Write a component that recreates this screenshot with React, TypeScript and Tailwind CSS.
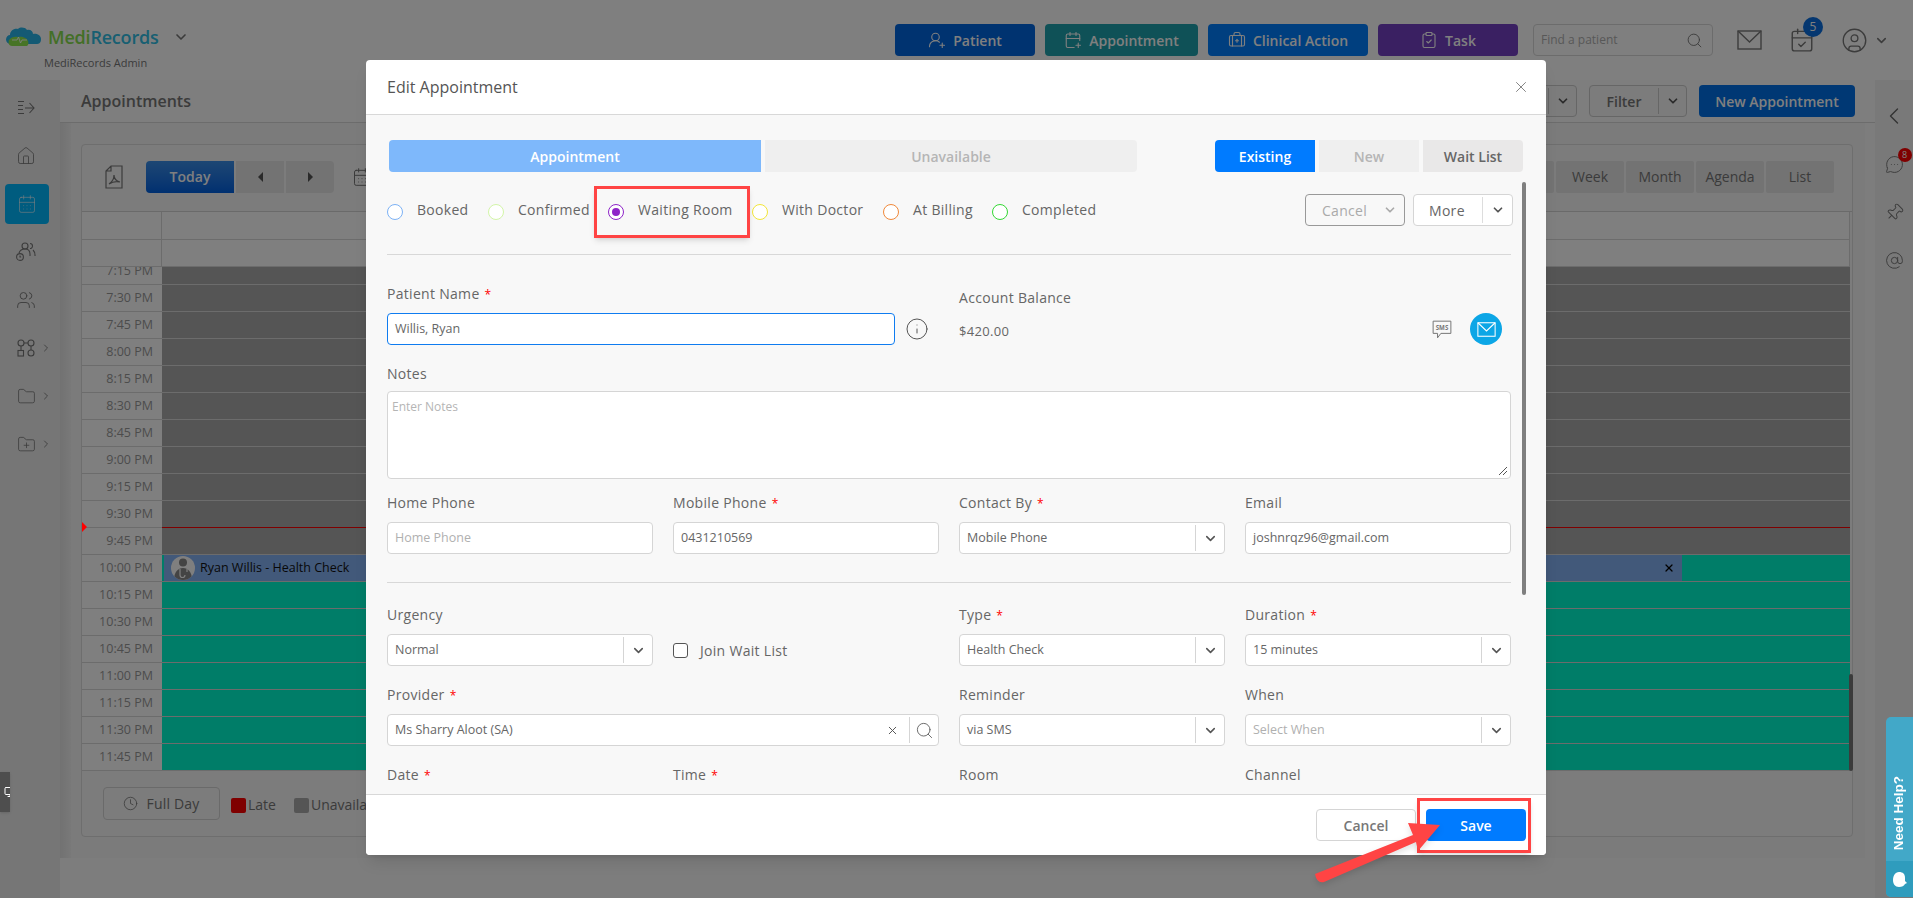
import {
  AtSign,
  BriefcaseMedical,
  CalendarCheck,
  CalendarDays,
  CalendarPlus,
  ChevronDown,
  ChevronLeft,
  ChevronRight,
  CircleUser,
  ClipboardCheck,
  Clock,
  Folder,
  FolderPlus,
  House,
  Info,
  MessageCircleMore,
  Monitor,
  Pin,
  Search,
  UserRoundPlus,
  Users,
  X,
} from 'lucide-react'

const times = [
  '7:15 PM', '7:30 PM', '7:45 PM', '8:00 PM', '8:15 PM', '8:30 PM', '8:45 PM', '9:00 PM', '9:15 PM', '9:30 PM', '9:45 PM',
  '10:00 PM', '10:15 PM', '10:30 PM', '10:45 PM', '11:00 PM', '11:15 PM', '11:30 PM', '11:45 PM',
]

const statuses = [
  { label: 'Booked', width: 'w-[101px]', ring: 'border-[#7db2f5]' },
  { label: 'Confirmed', width: 'w-[120px]', ring: 'border-[#d3f5a8]' },
  { label: 'Waiting Room', width: 'w-[144px]', ring: 'border-[#8e24c8]', checked: true },
  { label: 'With Doctor', width: 'w-[131px]', ring: 'border-[#f2e53a]' },
  { label: 'At Billing', width: 'w-[109px]', ring: 'border-[#f0893a]' },
  { label: 'Completed', width: 'w-[110px]', ring: 'border-[#35d835]' },
]

function Logo() {
  return (
    <svg width="36" height="20" viewBox="0 0 36 20">
      <path d="M5 17c-3 0-5-2-5-4.500S2 8 4 8c0-4 4-7 8-6 2-2 7-2 9 1 3-1 6 1 6 4 2-1 8 0 8 5s-3 5-6 5z" fill="#28b4e8" />
      <path d="M6 19c-3 0-4-3-3-6 2-3 6-4 9-3 4-1 9 1 10 4 1 3 0 5-2 5z" fill="#8fe84c" />
      <path d="M6 13h5l1.500-3 2 6 1.500-3h5" fill="none" stroke="#fff" strokeWidth="0.9" />
    </svg>
  )
}

function NavCollapseIcon() {
  return (
    <svg width="18" height="16" viewBox="0 0 18 16" fill="none" stroke="#777" strokeWidth="1.100">
      <path d="M1 1.500h6M1 5.500h5M1 9.500h5M1 13.500h6M8 8h9M12.500 3l4.500 5-4.500 5" />
    </svg>
  )
}

function UsersClockIcon() {
  return (
    <svg width="20" height="20" viewBox="0 0 20 20" fill="none" stroke="#777" strokeWidth="1.100">
      <circle cx="9" cy="4" r="3" />
      <path d="M14 1.500a2.500 2.500 0 0 1 0 5M3 11c1-3 3-4 6-4s5 1.500 5 5v2M17 8c1 1 2 2 2 5v1" />
      <circle cx="4" cy="15" r="3.400" />
      <path d="M4 13.500V15h1.200" />
    </svg>
  )
}

function WorkflowIcon() {
  return (
    <svg width="18" height="18" viewBox="0 0 18 18" fill="none" stroke="#777" strokeWidth="1.100">
      <circle cx="4" cy="4" r="3" />
      <circle cx="14" cy="4" r="3" />
      <rect x="1" y="11.500" width="5.500" height="5.500" />
      <circle cx="14" cy="14" r="3" />
      <path d="M7 4h4M4 7v4M14 7v4" />
    </svg>
  )
}

function EnvelopeIcon({ stroke, width, height }: { stroke: string; width: number; height: number }) {
  return (
    <svg width={width} height={height} viewBox="0 0 25 20" fill="none" stroke={stroke} strokeWidth="1.400">
      <rect x="1" y="1" width="23" height="18" />
      <path d="M1 1l11.500 11L24 1" />
    </svg>
  )
}

function DoctorAvatar() {
  return (
    <svg width="24" height="24" viewBox="0 0 24 24" className="rounded-full bg-[#fff]">
      <circle cx="12" cy="6.500" r="4" fill="#888" />
      <path d="M3 24c0-8 4-12 9-12s9 4 9 12z" fill="#888" />
      <path d="M9 13v6a2.500 2.500 0 0 0 5 0M16 13v3" fill="none" stroke="#fff" strokeWidth="1.200" />
    </svg>
  )
}

function Label({ text, required }: { text: string; required?: boolean }) {
  return (
    <div className="h-5 text-[14px] leading-5 tracking-[0.3px] text-[#666]">
      {text}
      {required && <span className="ml-[5px] text-[12px] text-[#f00]">*</span>}
    </div>
  )
}

function TextBox({ value, placeholder, focused }: { value?: string; placeholder?: string; focused?: boolean }) {
  return (
    <div
      className={`mt-[9px] flex h-8 items-center rounded-[4px] border bg-white px-[7px] text-[12.500px] ${
        focused ? 'border-[#0f7cf0]' : 'border-[#d5d5d5]'
      } ${value ? 'text-[#666]' : 'text-[#b0b0b0]'}`}
    >
      <span className="pt-px">{value || placeholder}</span>
    </div>
  )
}

function SelectBox({ value, placeholder }: { value?: string; placeholder?: string }) {
  return (
    <div className="mt-[9px] flex h-8 items-center rounded-[4px] border border-[#d5d5d5] bg-white pl-[7px] text-[12.500px]">
      <span className={`flex-1 pt-px ${value ? 'text-[#666]' : 'text-[#b0b0b0]'}`}>{value || placeholder}</span>
      <span className="flex h-[26px] w-[29px] items-center justify-center border-l border-[#d5d5d5]">
        <ChevronDown size={15} strokeWidth={2.500} className="text-[#555]" />
      </span>
    </div>
  )
}

function SplitButton({ label, className }: { label?: string; className: string }) {
  return (
    <div className={`flex h-8 items-center rounded-[4px] border border-[#ccc] bg-[#f8f8f8] text-[14px] font-semibold text-[#777] ${className}`}>
      <span className="flex-1 text-center">{label}</span>
      <span className="flex h-[26px] w-[28px] items-center justify-center border-l border-[#ccc]">
        <ChevronDown size={14} strokeWidth={3} className="text-[#555]" />
      </span>
    </div>
  )
}

function TopButton({ label, icon, className }: { label: string; icon: React.ReactNode; className: string }) {
  return (
    <div className={`flex h-8 items-center justify-center gap-[7px] rounded-[4px] text-[14px] font-semibold text-white ${className}`}>
      {icon}
      {label}
    </div>
  )
}

function TopBar() {
  return (
    <div className="flex h-20 items-center bg-white shadow-sm">
      <div className="ml-[6px] mt-4 w-[500px]">
        <div className="flex items-center">
          <Logo />
          <span className="ml-[6px] text-[18px] font-semibold leading-6 tracking-[-0.2px]">
            <span className="text-[#86de4e]">Medi</span>
            <span className="text-[#30bfe4]">Records</span>
          </span>
          <ChevronDown size={16} strokeWidth={2.500} className="ml-[14px] text-[#777]" />
        </div>
        <div className="ml-[38px] mt-[6px] text-[11px] leading-4 text-[#777]">MediRecords Admin</div>
      </div>
      <div className="ml-[389px] flex items-center gap-[10px]">
        <TopButton label="Patient" className="w-[140px] bg-[#0066e0]" icon={<UserRoundPlus size={18} strokeWidth={1.500} />} />
        <TopButton label="Appointment" className="w-[153px] bg-[#1ea2ae]" icon={<CalendarPlus size={18} strokeWidth={1.500} />} />
        <TopButton label="Clinical Action" className="w-[160px] bg-[#007eff]" icon={<BriefcaseMedical size={18} strokeWidth={1.500} />} />
        <TopButton label="Task" className="w-[140px] bg-[#7440c4]" icon={<ClipboardCheck size={18} strokeWidth={1.500} />} />
      </div>
      <div className="ml-[15px] flex h-8 w-[180px] items-center rounded-[4px] border border-[#d8d8d8] bg-white pl-[7px] pr-[9px] text-[12px] text-[#b0b0b0]">
        <span className="flex-1">Find a patient</span>
        <Search size={17} strokeWidth={1.300} className="text-[#777]" />
      </div>
      <span className="ml-[24px]"><EnvelopeIcon stroke="#787878" width={25} height={20} /></span>
      <div className="relative ml-[27px]">
        <CalendarCheck size={26} strokeWidth={1.300} className="text-[#787878]" />
        <span className="absolute -right-[8px] -top-[10px] flex h-5 w-5 items-center justify-center rounded-full bg-[#0a6fe0] text-[12px] text-white">5</span>
      </div>
      <CircleUser size={27} strokeWidth={1.200} className="ml-[26px] text-[#787878]" />
      <ChevronDown size={15} strokeWidth={2.500} className="ml-[6px] text-[#787878]" />
    </div>
  )
}

function SideNav() {
  return (
    <div className="flex w-[60px] flex-col bg-[#ececec] pt-1">
      <div className="flex h-12 w-[52px] items-center justify-center"><NavCollapseIcon /></div>
      <div className="flex h-12 w-[52px] items-center justify-center"><House size={20} strokeWidth={1} className="text-[#777]" /></div>
      <div className="flex h-12 items-center pl-[5px]">
        <div className="flex h-10 w-11 items-center justify-center rounded-[4px] bg-[#00b8ff]">
          <CalendarDays size={20} strokeWidth={1.200} className="text-white/60" />
        </div>
      </div>
      <div className="flex h-12 w-[52px] items-center justify-center"><UsersClockIcon /></div>
      <div className="flex h-12 w-[52px] items-center justify-center"><Users size={20} strokeWidth={1.100} className="text-[#777]" /></div>
      <div className="flex h-12 items-center pl-[17px]"><WorkflowIcon /><ChevronRight size={12} className="ml-[5px] text-[#888]" /></div>
      <div className="flex h-12 items-center pl-[17px]"><Folder size={19} strokeWidth={1} className="text-[#777]" /><ChevronRight size={12} className="ml-[4px] text-[#888]" /></div>
      <div className="flex h-12 items-center pl-[17px]"><FolderPlus size={19} strokeWidth={1} className="text-[#777]" /><ChevronRight size={12} className="ml-[4px] text-[#888]" /></div>
    </div>
  )
}

function RightRail() {
  return (
    <div className="flex w-[38px] flex-col items-center bg-[#f2f2f2] pt-[12px]">
      <div className="flex h-12 items-center"><ChevronLeft size={28} strokeWidth={1.200} className="text-[#666]" /></div>
      <div className="relative flex h-12 items-center">
        <MessageCircleMore size={19} strokeWidth={1.200} className="text-[#777]" />
        <span className="absolute -right-[8px] top-[8px] flex h-[14px] w-[14px] items-center justify-center rounded-full bg-[#ff0000] text-[9px] text-white">8</span>
      </div>
      <div className="flex h-12 items-center"><Pin size={19} strokeWidth={1.200} className="rotate-45 text-[#777]" /></div>
      <div className="flex h-12 items-center"><AtSign size={19} strokeWidth={1.200} className="text-[#777]" /></div>
    </div>
  )
}

function GridRow({ time, index }: { time: string; index: number }) {
  const busy = index < 11
  const hasEvent = time === '10:00 PM'
  const now = time === '9:30 PM'
  return (
    <div className="relative flex h-[27px] border-b border-[#d8d8d8]">
      {now && <span className="absolute -bottom-[5px] left-0 z-10 h-0 w-0 border-y-[5px] border-l-[5px] border-y-transparent border-l-[#ff0000]" />}
      <div className="w-[80px] bg-white pr-[9px] text-right text-[12.500px] leading-[26px] text-[#999]">{time}</div>
      <div className={`flex flex-1 ${busy ? 'bg-[#aaa]' : 'bg-[#00fad0]'} ${now ? '-mb-px border-b border-[#ff0000]' : ''}`}>
        {hasEvent && (
          <div className="flex w-[1520px] items-center border-l-[2px] border-[#00fad0] bg-[#84b2f4] pl-[7px] text-[12.500px] text-[#111]">
            <DoctorAvatar />
            <span className="ml-[5px] flex-1">Ryan Willis - Health Check</span>
            <X size={12} strokeWidth={2.500} className="mr-[7px] text-black" />
          </div>
        )}
      </div>
    </div>
  )
}

function ViewTab({ label, className }: { label: string; className?: string }) {
  return (
    <div className={`flex h-8 w-[68px] items-center justify-center rounded-[2px] bg-[#e6e6e6] text-[14px] text-[#777] ${className ?? ''}`}>
      {label}
    </div>
  )
}

function Calendar() {
  return (
    <div className="relative ml-[10px] mr-[12px] mt-[21px] flex h-[693px] flex-1 flex-col rounded-[4px] border border-[#dcdcdc] bg-[#f8f8f8]">
      <div className="flex h-[67px] shrink-0 items-center border-b border-[#d4d4d4] pb-[3px] pl-[23px] pr-[18px]">
        <svg width="18" height="24" viewBox="0 0 18 24" fill="none" stroke="#777" strokeWidth="1.200">
          <path d="M6 1h11v22H1V6zM6 1v5H1M4 19c3-2 5-6 5-9 0 4 2 6 6 7-4-1-8 0-11 2z" />
        </svg>
        <div className="ml-[23px] flex h-8 w-[88px] items-center justify-center rounded-l-[4px] bg-gradient-to-b from-[#3a8ee8] to-[#0060e0] text-[14px] font-semibold text-white">Today</div>
        <div className="ml-[2px] flex h-8 w-12 items-center justify-center bg-[#e6e6e6]"><span className="h-0 w-0 border-y-[5px] border-r-[5px] border-y-transparent border-r-[#555]" /></div>
        <div className="ml-[2px] flex h-8 w-12 items-center justify-center rounded-r-[4px] bg-[#e6e6e6]"><span className="h-0 w-0 border-y-[5px] border-l-[5px] border-y-transparent border-l-[#555]" /></div>
        <CalendarDays size={20} strokeWidth={1.200} className="ml-[18px] text-[#777]" />
        <div className="ml-auto flex items-center gap-[2px]">
          <ViewTab label="Day" className="bg-[#0070f0] text-white" />
          <ViewTab label="Week" />
          <ViewTab label="Month" />
          <ViewTab label="Agenda" />
          <ViewTab label="List" />
        </div>
      </div>
      <div className="mr-[2px] border-r border-[#d8d8d8]">
        <div className="flex h-[28px] border-b border-[#d8d8d8] bg-white"><div className="w-[80px] border-r border-[#d8d8d8]" /></div>
        <div className="flex h-[27px] border-b border-[#d8d8d8] bg-white"><div className="w-[80px] border-r border-[#d8d8d8]" /></div>
      </div>
      <div className="mr-[2px] h-[504px] overflow-hidden">
        <div className="-mt-[9px]">
          {times.map((t, i) => (
            <GridRow key={t} time={t} index={i} />
          ))}
        </div>
      </div>
      <div className="absolute right-[-1px] top-[529px] h-[97px] w-[4px] rounded-full bg-[#777]" />
      <div className="flex flex-1 items-start pl-[21px] pt-[16px] text-[14px] text-[#777]">
        <div className="flex h-[33px] w-[117px] items-center justify-center gap-[8px] rounded-[4px] border border-[#d4d4d4] tracking-[0.2px]">
          <Clock size={15} strokeWidth={1.300} />
          Full Day
        </div>
        <span className="ml-[11px] mt-[11px] h-[15px] w-[15px] rounded-[2px] bg-[#ff0000]" />
        <span className="ml-[2px] mt-[7px]">Late</span>
        <span className="ml-[18px] mt-[11px] h-[15px] w-[15px] rounded-[2px] bg-[#aaa]" />
        <span className="ml-[2px] mt-[7px]">Unavailable</span>
      </div>
    </div>
  )
}

function MainArea() {
  return (
    <div className="flex flex-1 flex-col bg-[#fbfbfb]">
      <div className="flex h-[43px] shrink-0 items-center border-b border-[#d8d8d8] bg-[#fcfcfc] pl-[21px] pr-[20px]">
        <span className="text-[16px] font-semibold text-[#777]">Appointments</span>
        <div className="ml-auto flex items-center gap-3">
          <SplitButton className="w-[78px]" />
          <SplitButton label="Filter" className="w-[98px]" />
          <div className="flex h-8 w-[156px] items-center justify-center rounded-[4px] bg-[#0070e8] text-[14px] font-semibold text-white">New Appointment</div>
        </div>
      </div>
      <div className="mr-[10px] flex h-[735px] bg-[#f6f6f6]">
        <div className="w-[11px] bg-gradient-to-r from-[#e4e4e4] to-[#f2f2f2]" />
        <Calendar />
      </div>
    </div>
  )
}

function StatusRow() {
  return (
    <div className="-mr-[2px] mt-[22px] flex h-8 items-center">
      {statuses.map((s) => (
        <div key={s.label} className={`flex items-center ${s.width}`}>
          <span className={`mt-[4px] flex h-4 w-4 shrink-0 items-center justify-center rounded-full border ${s.ring} bg-white`}>
            {s.checked && <span className="h-2 w-2 rounded-full bg-[#8e24c8]" />}
          </span>
          <span className="-mt-px ml-[14px] whitespace-nowrap text-[14px] tracking-[0.3px] text-[#666]">{s.label}</span>
        </div>
      ))}
      <div className="ml-auto flex h-8 w-[100px] items-center rounded-[4px] border border-[#999] pl-[16px] pr-[7px] text-[14px] tracking-[0.3px] text-[#aaa]">
        <span className="flex-1">Cancel</span>
        <ChevronDown size={14} strokeWidth={3} />
      </div>
      <div className="ml-2 flex h-8 w-[100px] items-center rounded-[4px] border border-[#d5d5d5] bg-white pl-[15px] text-[14px] tracking-[0.3px] text-[#666]">
        <span className="flex-1">More</span>
        <span className="flex h-[26px] w-[30px] items-center justify-center border-l border-[#ddd]">
          <ChevronDown size={14} strokeWidth={3} className="text-[#555]" />
        </span>
      </div>
    </div>
  )
}

function EditAppointmentModal() {
  return (
    <div className="absolute left-[366px] top-[60px] flex h-[795px] w-[1180px] flex-col overflow-hidden rounded-[4px] bg-white shadow-lg">
      <div className="flex h-[55px] shrink-0 items-center justify-between border-b border-[#d8d8d8] pl-[21px] pr-[16px]">
        <span className="text-[16px] text-[#555]">Edit Appointment</span>
        <X size={18} strokeWidth={1.200} className="text-[#777]" />
      </div>

      <div className="relative min-h-0 flex-1 overflow-hidden bg-[#f8f8f8] pl-[21px] pr-[35px] pt-[25px]">
        <div className="absolute right-[20px] top-[67px] h-[413px] w-[4px] rounded-full bg-[#7f7f7f]" />

        <div className="-mr-3 ml-[2px] flex h-8 text-[14px] font-semibold">
          <div className="flex w-[372px] items-center justify-center rounded-l-[4px] bg-[#7eb8fb] text-white">Appointment</div>
          <div className="ml-1 flex w-[372px] items-center justify-center rounded-r-[4px] bg-[#efefef] text-[#b5b5b5]">Unavailable</div>
          <div className="ml-auto flex w-[100px] items-center justify-center rounded-l-[4px] bg-[#007bff] text-white">Existing</div>
          <div className="ml-1 flex w-[100px] items-center justify-center bg-[#efefef] text-[#b5b5b5]">New</div>
          <div className="ml-1 flex w-[100px] items-center justify-center rounded-r-[4px] bg-[#e9e8e8] text-[#666]">Wait List</div>
        </div>

        <StatusRow />

        <div className="mt-[28px] border-t border-[#d8d8d8]" />

        <div className="mt-[29px] grid grid-cols-4 gap-x-5">
          <div className="col-span-2">
            <Label text="Patient Name" required />
            <div className="flex items-center">
              <div className="w-[508px]"><TextBox value="Willis, Ryan" focused /></div>
              <Info size={24} strokeWidth={1} className="ml-[10px] mt-[9px] text-[#555]" />
            </div>
          </div>
          <div className="pt-1">
            <Label text="Account Balance" />
            <div className="mt-[13px] text-[13px] leading-5 tracking-[0.3px] text-[#666]">$420.00</div>
          </div>
          <div className="flex items-center justify-end gap-[18px] pr-[9px] pt-[29px]">
            <svg width="20" height="19" viewBox="0 0 18 17" fill="none" stroke="#777" strokeWidth="0.900">
              <path d="M1 1h16v11H8l-3 4v-4H1z" />
              <text x="9" y="9" fontSize="5.500" fontWeight="700" textAnchor="middle" fill="#777" stroke="none">SMS</text>
            </svg>
            <span className="flex h-8 w-8 items-center justify-center rounded-full bg-[#0ca6e6]">
              <EnvelopeIcon stroke="#fff" width={19} height={15} />
            </span>
          </div>
        </div>

        <div className="mt-[19px]">
          <Label text="Notes" />
          <div className="relative mt-[7px] h-[88px] rounded-[4px] border border-[#d5d5d5] bg-white px-1 py-[6px] text-[12px] text-[#b5b5b5]">
            Enter Notes
            <svg width="10" height="10" viewBox="0 0 10 10" className="absolute bottom-[2px] right-[2px]" stroke="#555" strokeWidth="1">
              <path d="M9 1 1 9M9 5 5 9" />
            </svg>
          </div>
        </div>

        <div className="mt-[14px] grid grid-cols-4 gap-x-5">
          <div><Label text="Home Phone" /><TextBox placeholder="Home Phone" /></div>
          <div><Label text="Mobile Phone" required /><TextBox value="0431210569" /></div>
          <div><Label text="Contact By" required /><SelectBox value="Mobile Phone" /></div>
          <div><Label text="Email" /><TextBox value="joshnrqz96@gmail.com" /></div>
        </div>

        <div className="mt-[28px] border-t border-[#d8d8d8]" />

        <div className="mt-[22px] grid grid-cols-4 gap-x-5 gap-y-[19px]">
          <div><Label text="Urgency" /><SelectBox value="Normal" /></div>
          <div className="flex items-center pt-[29px] text-[14px] tracking-[0.3px] text-[#666]">
            <span className="h-[15px] w-[15px] rounded-[3px] border border-[#555] bg-white" />
            <span className="ml-3">Join Wait List</span>
          </div>
          <div><Label text="Type" required /><SelectBox value="Health Check" /></div>
          <div><Label text="Duration" required /><SelectBox value="15 minutes" /></div>

          <div className="col-span-2">
            <Label text="Provider" required />
            <div className="mt-[9px] flex h-8 items-center rounded-[4px] border border-[#d5d5d5] bg-white pl-[7px] text-[12.500px] text-[#666]">
              <span className="flex-1 pt-px">Ms Sharry Aloot (SA)</span>
              <X size={13} strokeWidth={1.800} className="mr-[10px] text-[#555]" />
              <span className="flex h-[26px] w-[29px] items-center justify-center border-l border-[#d5d5d5]">
                <Search size={19} strokeWidth={1.200} className="text-[#666]" />
              </span>
            </div>
          </div>
          <div><Label text="Reminder" /><SelectBox value="via SMS" /></div>
          <div><Label text="When" /><SelectBox placeholder="Select When" /></div>

          <Label text="Date" required />
          <Label text="Time" required />
          <Label text="Room" />
          <Label text="Channel" />
        </div>
      </div>

      <div className="flex h-[61px] shrink-0 items-center justify-end gap-[10px] border-t border-[#d8d8d8] bg-white pr-5">
        <div className="flex h-8 w-[100px] items-center justify-center rounded-[4px] border border-[#d5d5d5] text-[14px] font-semibold text-[#777]">Cancel</div>
        <div className="flex h-8 w-[100px] items-center justify-center rounded-[4px] bg-[#007bff] text-[14px] font-semibold text-white">Save</div>
      </div>
    </div>
  )
}

export default function App() {
  return (
    <div className="relative flex h-[898px] w-full flex-col overflow-hidden bg-[#f8f8f8] font-['Open_Sans',sans-serif]">
      <TopBar />
      <div className="flex min-h-0 flex-1">
        <SideNav />
        <MainArea />
        <RightRail />
      </div>

      <div className="absolute inset-0 bg-black/50" />

      <div className="absolute left-0 top-[772px] flex h-10 w-[10px] items-center justify-end overflow-hidden bg-[#4e4e4e] shadow">
        <Monitor size={12} className="shrink-0 translate-x-[6px] text-white" />
      </div>

      <div className="absolute right-0 top-[717px] flex h-[180px] w-[27px] flex-col overflow-hidden rounded-l-[5px] bg-[#42a8c8]">
        <div className="flex flex-1 items-center justify-end pb-[11px] font-['Liberation_Sans',sans-serif] text-[13.500px] font-bold text-white [writing-mode:vertical-rl]">
          <span className="rotate-180">Need Help?</span>
        </div>
        <div className="flex h-9 items-center justify-center bg-[#2f9cbd]">
          <svg width="17" height="17" viewBox="0 0 17 17" fill="#fff">
            <path d="M8 1c4 0 6 2 6 6v3l2 2-2 1c-1 2-3 3-6 3-4 0-6-3-6-7s2-8 6-8z" />
          </svg>
        </div>
      </div>

      <EditAppointmentModal />

      <div className="absolute left-[594px] top-[186px] h-[52px] w-[156px] border-[3px] border-[#ff4444] shadow-md" />
      <div className="absolute left-[1417px] top-[798px] h-[55px] w-[114px] border-[3px] border-[#ff4444] shadow-md" />
      <svg width="150" height="80" viewBox="0 0 150 80" className="absolute left-[1300px] top-[810px] drop-shadow-md">
        <path d="M15 64 113 25 108 13 140 15 118 41 116 32 24 72Q17 74 15 64Z" fill="#ff4444" />
      </svg>
    </div>
  )
}
